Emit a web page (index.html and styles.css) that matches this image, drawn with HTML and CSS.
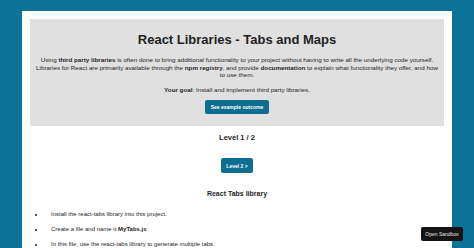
FILE: index.html
```html
<!DOCTYPE html>
<html lang="en">
<head>
  <meta charset="UTF-8" />
  <meta name="viewport" content="width=device-width, initial-scale=1.0"/>
  <title>React Libraries - Tabs and Maps</title>
  <link rel="stylesheet" href="styles.css">
</head>
<body>

  <div id="page">
    <div id="intro">
      <h1>React Libraries - Tabs and Maps</h1>
      <p>Using <strong>third party libraries</strong> is often done to bring additional functionality to your project without having to write all the underlying code yourself. Libraries for React are primarily available through the <strong>npm registry</strong>, and provide <strong>documentation</strong> to explain what functionality they offer, and how to use them.</p>
      <p><strong>Your goal</strong>: Install and implement third party libraries.</p>
      <button class="button">See example outcome</button>
    </div>

    <div id="level">Level 1 / 2</div>
    <button class="button next">Level 2 &gt;</button>

    <h2>React Tabs library</h2>
    <ul id="steps">
      <li>Install the react-tabs library into this project.</li>
      <li>Create a file and name it <strong>MyTabs.js</strong></li>
      <li>In this file, use the react-tabs library to generate multiple tabs.</li>
    </ul>
  </div>

  <div id="sandbox">Open Sandbox</div>

</body>
</html>
```

FILE: styles.css
```css
body {
  margin: 0;
  height: 248px;
  overflow: hidden;
  background-color: #0b7398;
  font-family: 'Liberation Sans', Arial, sans-serif;
  color: #1e1e1e;
  padding-top: 11px;
  box-sizing: border-box;
}

#page {
  background-color: #ffffff;
  margin: 0 22px;
  padding: 8px;
  height: 400px;
  text-align: center;
}

#intro {
  background-color: #e0e0e0;
  padding: 12px 3px 12px;
}

#intro h1 {
  font-size: 13px;
  line-height: 18px;
  margin: 0 0 7px;
}

#intro p {
  font-size: 6.25px;
  line-height: 7.5px;
  margin: 0 0 7px;
}

.button {
  display: block;
  font-family: inherit;
  font-size: 5px;
  font-weight: bold;
  color: #ffffff;
  background-color: #0d6e92;
  border: none;
  border-radius: 2px;
  padding: 0 6px;
  height: 14px;
  margin: 3px auto 0;
}

#level {
  font-size: 7.5px;
  font-weight: bold;
  line-height: 11px;
  margin: 6px 0 15px;
}

.button.next {
  height: 15px;
  padding: 0 5px;
  margin: 0 auto;
}

h2 {
  font-size: 7px;
  line-height: 9px;
  margin: 16px 0 12px;
}

#steps {
  text-align: left;
  font-size: 6px;
  line-height: 9px;
  margin: 0;
  padding-left: 15px;
}

#steps li {
  margin-bottom: 6px;
  padding-left: 6px;
}

#sandbox {
  position: absolute;
  left: 421px;
  top: 227px;
  width: 42px;
  height: 14px;
  line-height: 14px;
  background-color: #151515;
  color: #e8e8e8;
  font-size: 5px;
  text-align: center;
  border-radius: 2px;
}
```
